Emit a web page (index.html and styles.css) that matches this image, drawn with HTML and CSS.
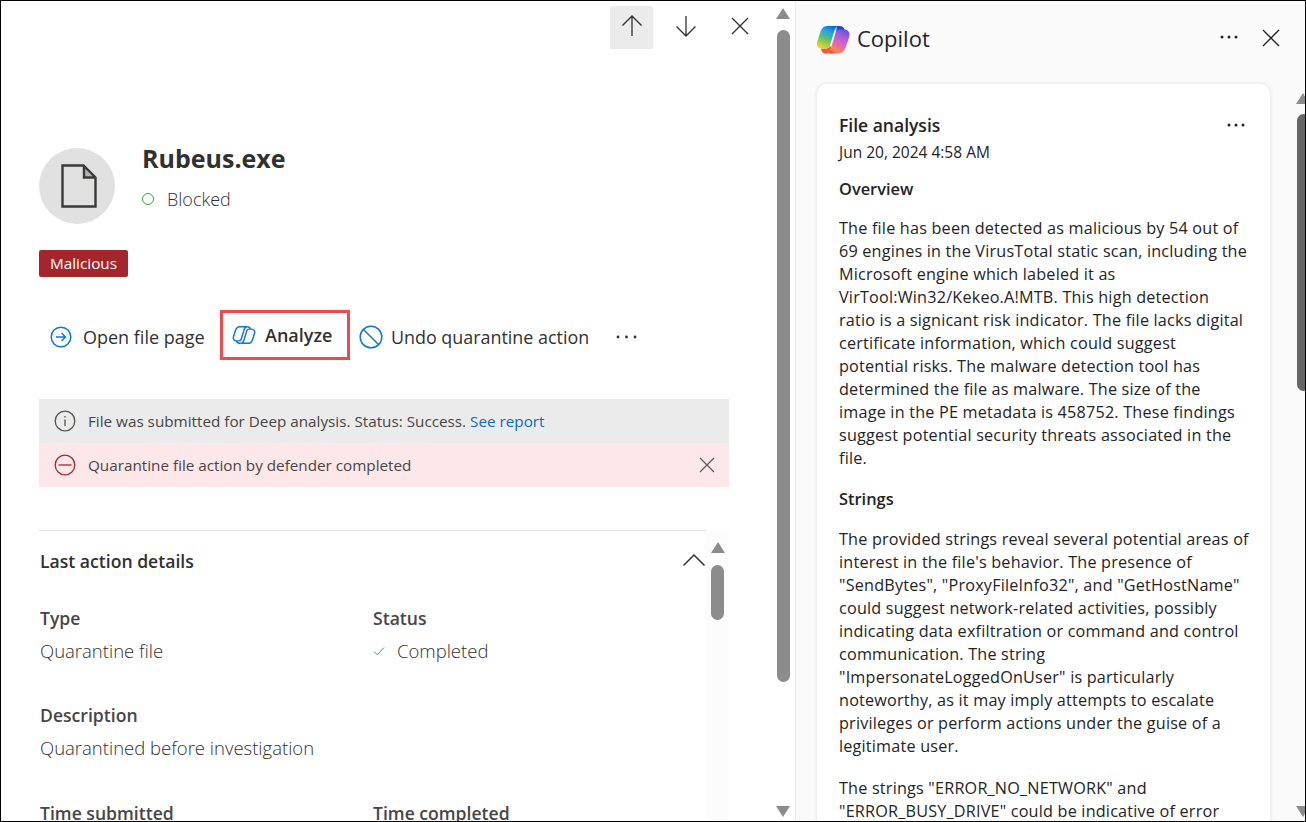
FILE: index.html
```html
<!DOCTYPE html>
<html lang="en">
<head>
  <meta charset="utf-8">
  <title>Rubeus.exe</title>
  <link rel="stylesheet" href="styles.css">
</head>
<body>
<svg class="defs" width="0" height="0">
  <defs>
    <linearGradient id="gradLeft" x1="0.75" y1="0" x2="0.3" y2="1">
      <stop offset="0" stop-color="#0b5fd8"/>
      <stop offset="0.3" stop-color="#1fa4e8"/>
      <stop offset="0.6" stop-color="#5cc26a"/>
      <stop offset="1" stop-color="#ecd42a"/>
    </linearGradient>
    <linearGradient id="gradRight" x1="0.75" y1="0" x2="0.25" y2="1">
      <stop offset="0" stop-color="#6a4fe0"/>
      <stop offset="0.3" stop-color="#b05ddc"/>
      <stop offset="0.65" stop-color="#ee6aa8"/>
      <stop offset="0.85" stop-color="#fb8a4a"/>
      <stop offset="1" stop-color="#e8442c"/>
    </linearGradient>
  </defs>
</svg>

<div class="frame">
  <div class="left-pane">
    <div class="left-main">
      <div class="nav-bar">
        <button class="nav-btn active">
          <svg width="22" height="24" viewBox="0 0 22 24"><path d="M11 22V2M1.500 11.500 11 2l9.500 9.500"/></svg>
        </button>
        <button class="nav-btn">
          <svg width="22" height="24" viewBox="0 0 22 24"><path d="M11 2v20M1.500 12.500 11 22l9.500-9.500"/></svg>
        </button>
        <button class="nav-btn">
          <svg width="18" height="18" viewBox="0 0 18 18"><path d="M1 1l16 16M17 1 1 17"/></svg>
        </button>
      </div>

      <div class="file-head">
        <div class="file-avatar">
          <svg width="36" height="44" viewBox="0 0 36 44"><path class="fold" d="M23 2v11h11z"/><path d="M1.500 1.500h21l12 12v29h-33zM23 2v11.500h11.500"/></svg>
        </div>
        <div>
          <h1 class="file-name">Rubeus.exe</h1>
          <div class="file-state"><span class="state-dot"></span>Blocked</div>
        </div>
      </div>

      <span class="tag">Malicious</span>

      <div class="actions">
        <div class="action">
          <svg width="22" height="22" viewBox="0 0 22 22"><circle cx="11" cy="11" r="9.800"/><path d="M6 11h9.500M11.500 7l4 4-4 4"/></svg>
          Open file page
        </div>
        <div class="action analyze">
          <svg width="24" height="20" viewBox="0 0 24.500 20"><path d="M8 1.500h7.500c-1.700 0-2.600 1.200-3 2.700L9.300 14.500c-.4 1.200-1.300 1.500-2.300 1.500H4.500C2 16 .8 14 1.500 11.700l2-6.200C4.300 3 5.800 1.500 8 1.500z"/><path d="M9 18.500h7.500c2.200 0 3.700-1.500 4.500-4l2-6.200C23.700 6 22.500 4 20 4h-2.500c-1 0-1.900.3-2.300 1.500L12 15.800c-.4 1.500-1.300 2.700-3 2.700z"/><path d="M15.500 1.500c1.800 0 3 1 3.300 2.500M4.500 16c.2 1.500 1.500 2.500 4.500 2.500"/></svg>
          Analyze
        </div>
        <div class="action">
          <svg width="24" height="24" viewBox="0 0 24 24"><circle cx="12" cy="12" r="10.800"/><path d="M4.500 4.500l15 15"/></svg>
          Undo quarantine action
        </div>
        <svg class="more" width="21" height="4" viewBox="0 0 21 4"><circle cx="2" cy="2" r="1.400"/><circle cx="10.500" cy="2" r="1.400"/><circle cx="19" cy="2" r="1.400"/></svg>
      </div>

      <div class="notice info">
        <svg width="22" height="22" viewBox="0 0 22 22"><circle cx="11" cy="11" r="9.800"/><path d="M11 9.500v6.500M11 6v1.600"/></svg>
        <span>File was submitted for Deep analysis. Status: Success. <a class="report">See report</a></span>
      </div>
      <div class="notice blocked">
        <svg width="22" height="22" viewBox="0 0 22 22"><circle cx="11" cy="11" r="9.800"/><path d="M4.500 11h13"/></svg>
        <span>Quarantine file action by defender completed</span>
        <svg class="notice-close" width="16" height="16" viewBox="0 0 16 16"><path d="M1 1l14 14M15 1 1 15"/></svg>
      </div>

      <div class="details">
        <div class="details-body">
          <div class="details-head">
            <h2>Last action details</h2>
            <svg width="24" height="14" viewBox="0 0 24 14"><path d="M1.500 12.500 12 2l10.500 10.500"/></svg>
          </div>
          <div class="fields">
            <div>
              <div class="field-label">Type</div>
              <div class="field-value">Quarantine file</div>
            </div>
            <div>
              <div class="field-label">Status</div>
              <div class="field-value status">
                <svg width="12" height="10" viewBox="0 0 12 10"><path d="M1 5.500 4.300 8.800 11 1.500"/></svg>
                Completed
              </div>
            </div>
            <div class="wide">
              <div class="field-label">Description</div>
              <div class="field-value">Quarantined before investigation</div>
            </div>
            <div>
              <div class="field-label">Time submitted</div>
            </div>
            <div>
              <div class="field-label">Time completed</div>
            </div>
          </div>
        </div>
        <div class="inner-scroll">
          <span class="arrow-up"></span>
          <span class="inner-thumb"></span>
        </div>
      </div>
    </div>
    <div class="pane-scroll">
      <span class="arrow-up"></span>
      <span class="pane-thumb"></span>
      <span class="arrow-down"></span>
    </div>
  </div>

  <div class="copilot">
    <div class="copilot-head">
      <svg class="logo" width="34" height="29" viewBox="0 0 24.500 20.500">
        <path fill="#1a50d0" d="M15 .5h2c2.200 0 3.400 1.200 3.800 3.200h-4.100c-1.200 0-2 .6-2.400 1.800z"/>
        <path fill="#ef5a30" d="M3.500 16.700h4c1.200 0 2-.5 2.500-1.500l1.200.3c-.5 2-1.700 5-4.200 5-2 0-3.200-1.700-3.500-3.800z"/>
        <path fill="url(#gradRight)" d="M7.500 20.300h9c2.500 0 4.300-2.500 5.200-5.200l2.200-6.700C24.700 5.700 23.400 3 20.500 3h-3.800c-1.200 0-2 .6-2.400 1.800L11 15.800c-.5 1.900-1.600 4.500-3.500 4.500z"/>
        <path fill="url(#gradLeft)" d="M8 .5h9c-2 0-3.100 1.400-3.600 3.100L10 14.800c-.4 1.300-1.400 1.900-2.600 1.900H4.200C1.400 16.700.1 14.300.9 11.700l2.100-6.400C3.900 2.500 5.500.5 8 .5z"/>
      </svg>
      <span class="copilot-title">Copilot</span>
      <svg class="head-more" width="18" height="4" viewBox="0 0 18 4"><circle cx="2" cy="2" r="1.500"/><circle cx="9" cy="2" r="1.500"/><circle cx="16" cy="2" r="1.500"/></svg>
      <svg class="head-close" width="18" height="18" viewBox="0 0 18 18"><path d="M1 1l16 16M17 1 1 17"/></svg>
    </div>
    <div class="copilot-body">
      <div class="card">
        <div class="card-top">
          <h3>File analysis</h3>
          <svg class="card-more" width="18" height="4" viewBox="0 0 18 4"><circle cx="2" cy="2" r="1.500"/><circle cx="9" cy="2" r="1.500"/><circle cx="16" cy="2" r="1.500"/></svg>
        </div>
        <div class="card-date">Jun 20, 2024 4:58 AM</div>
        <h4 class="first">Overview</h4>
        <p class="intro">The file has been detected as malicious by 54 out of<br>69 engines in the VirusTotal static scan, including the<br>Microsoft engine which labeled it as<br>VirTool:Win32/Kekeo.A!MTB. This high detection<br>ratio is a signicant risk indicator. The file lacks digital<br>certificate information, which could suggest<br>potential risks. The malware detection tool has<br>determined the file as malware. The size of the<br>image in the PE metadata is 458752. These findings<br>suggest potential security threats associated in the<br>file.</p>
        <h4 class="section">Strings</h4>
        <p>The provided strings reveal several potential areas of<br>interest in the file's behavior. The presence of<br>"SendBytes", "ProxyFileInfo32", and "GetHostName"<br>could suggest network-related activities, possibly<br>indicating data exfiltration or command and control<br>communication. The string<br>"ImpersonateLoggedOnUser" is particularly<br>noteworthy, as it may imply attempts to escalate<br>privileges or perform actions under the guise of a<br>legitimate user.</p>
        <p class="next">The strings "ERROR_NO_NETWORK" and<br>"ERROR_BUSY_DRIVE" could be indicative of error</p>
      </div>
      <div class="card-scroll">
        <span class="arrow-up"></span>
        <span class="card-thumb"></span>
        <span class="arrow-down"></span>
      </div>
    </div>
  </div>
</div>
</body>
</html>
```

FILE: styles.css
```css
* {
  box-sizing: border-box;
}

html, body {
  margin: 0;
  padding: 0;
  height: 100%;
  overflow: hidden;
}

body {
  font-family: "Open Sans", "Noto Sans", sans-serif;
  color: #323130;
  background: #fff;
}

.defs {
  display: block;
  height: 0;
}

.frame {
  display: flex;
  width: 1306px;
  height: 822px;
  border: 1px solid #000;
  overflow: hidden;
}

svg {
  flex: none;
  fill: none;
  stroke: currentColor;
}

/* left pane */
.left-pane {
  display: flex;
  width: 794px;
  height: 100%;
  background: #fff;
  overflow: hidden;
}

.left-main {
  width: 775px;
  padding-left: 38px;
  overflow: hidden;
}

.nav-bar {
  display: flex;
  justify-content: flex-end;
  align-items: center;
  gap: 11px;
  height: 43px;
  margin-top: 5px;
  padding-right: 15px;
}

.nav-btn {
  display: flex;
  align-items: center;
  justify-content: center;
  width: 43px;
  height: 43px;
  padding: 0;
  border: none;
  border-radius: 2px;
  background: none;
  color: #323130;
}

.nav-btn.active {
  background: #ebebeb;
}

.nav-btn svg {
  stroke-width: 1.300;
  margin-bottom: 3px;
}

.file-head {
  display: flex;
  gap: 27px;
  margin-top: 99px;
  width: 690px;
}

.file-avatar {
  display: flex;
  align-items: center;
  justify-content: center;
  width: 76px;
  height: 76px;
  padding-left: 4px;
  border-radius: 50%;
  background: #e1e1e1;
}

.file-avatar svg {
  stroke-width: 2.400;
  stroke: #3b3a39;
}

.file-avatar .fold {
  fill: #b5b5b5;
  stroke: none;
}

.file-name {
  margin: -6px 0 0;
  font-size: 25px;
  line-height: 32px;
  font-weight: 700;
}

.file-state {
  display: flex;
  align-items: center;
  gap: 13px;
  margin-top: 10px;
  font-size: 18px;
  line-height: 30px;
  font-weight: 300;
}

.state-dot {
  width: 12px;
  height: 12px;
  border: 1.500px solid #3fa143;
  border-radius: 50%;
}

.tag {
  display: inline-block;
  margin-top: 26px;
  padding: 0 11px;
  height: 27px;
  line-height: 27px;
  font-size: 15.300px;
  color: #fff;
  background: #a4262c;
  border-radius: 2px;
}

.actions {
  display: flex;
  align-items: center;
  width: 690px;
  height: 50px;
  margin-top: 33px;
  font-size: 18px;
}

.action {
  display: flex;
  align-items: center;
  gap: 11px;
  white-space: nowrap;
  padding-top: 4px;
}

.action svg {
  color: #0f78d4;
  stroke-width: 1.500;
}

.action:first-child {
  padding-left: 11px;
  width: 181px;
}

.analyze {
  justify-content: flex-start;
  width: 130px;
  height: 50px;
  padding: 0 0 1px 9px;
  gap: 9px;
  border: 3px solid #f04a4f;
  font-weight: 600;
  font-size: 18px;
}

.analyze + .action {
  margin-left: 9px;
  gap: 8px;
  font-size: 17.900px;
}

.more {
  margin-left: 27px;
  margin-top: 3px;
  fill: #323130;
  stroke: none;
}

.notice {
  display: flex;
  align-items: center;
  gap: 12px;
  width: 690px;
  height: 44px;
  padding: 0 14px 0 15px;
  font-size: 15.250px;
  white-space: nowrap;
}

.notice svg {
  stroke-width: 1.300;
}

.notice.info {
  margin-top: 39px;
  background: #ebebeb;
  color: #484644;
}

.notice.info svg {
  color: #55534f;
}

.notice.blocked {
  background: #fde7e9;
  color: #484644;
}

.notice.blocked > svg:first-child {
  color: #a4262c;
}

.notice-close {
  margin-left: auto;
  color: #605e5c;
  stroke-width: 1px;
}

.report {
  color: #0f6cbd;
}

.details {
  display: flex;
  width: 690px;
  height: 300px;
  margin-top: 43px;
}

.details-body {
  width: 667px;
  border-top: 1px solid #e1e1e1;
}

.details-head {
  display: flex;
  justify-content: space-between;
  align-items: center;
  height: 60px;
  padding-left: 1px;
}

.details-head h2 {
  margin: 0;
  font-size: 17.600px;
  font-weight: 600;
}

.details-head svg {
  margin-bottom: 2px;
  stroke-width: 1.500;
}

.fields {
  display: grid;
  grid-template-columns: 333px 1fr;
  row-gap: 32px;
  margin-top: 11px;
  padding-left: 1px;
}

.fields .wide {
  grid-column: 1 / 3;
  margin-bottom: 1px;
}

.field-label {
  font-size: 17.600px;
  line-height: 32px;
  font-weight: 600;
  color: #484644;
  white-space: nowrap;
}

.field-value {
  margin-top: 1px;
  font-size: 18.500px;
  line-height: 32px;
  font-weight: 300;
  white-space: nowrap;
}

.status {
  display: flex;
  align-items: center;
  gap: 12px;
}

.status svg {
  color: #3fa143;
  stroke-width: 1;
}

.inner-scroll {
  display: flex;
  flex-direction: column;
  align-items: center;
  width: 23px;
  padding-top: 12px;
  background: #fcfcfc;
}

.inner-thumb {
  width: 13px;
  height: 55px;
  margin-top: 12px;
  border-radius: 7px;
  background: #8c8c8c;
}

.arrow-up, .arrow-down {
  width: 0;
  height: 0;
  border-left: 7px solid transparent;
  border-right: 7px solid transparent;
}

.arrow-up {
  border-bottom: 11px solid #8c8c8c;
}

.arrow-down {
  border-top: 11px solid #8c8c8c;
}

.pane-scroll {
  display: flex;
  flex-direction: column;
  align-items: center;
  width: 19px;
  height: 100%;
  padding: 7px 5px 4px 0;
}

.pane-thumb {
  flex: none;
  width: 13px;
  height: 652px;
  margin: 11px 0 auto;
  border-radius: 7px;
  background: #8c8c8c;
}

/* copilot pane */
.copilot {
  flex: 1;
  display: flex;
  flex-direction: column;
  height: 100%;
  border-left: 1px solid #ececec;
  background: #fafafa;
  overflow: hidden;
}

.copilot-head {
  display: flex;
  align-items: center;
  height: 83px;
  padding: 0 25px 6px 20px;
  flex: none;
}

.logo {
  stroke: none;
}

.copilot-title {
  margin-left: 7px;
  margin-bottom: 3px;
  font-size: 22px;
  color: #242424;
}

.head-more {
  margin-left: auto;
  margin-bottom: 5px;
  fill: #242424;
  stroke: none;
}

.head-close {
  margin-left: 24px;
  margin-bottom: 4px;
  stroke-width: 1.400;
  color: #242424;
}

.copilot-body {
  flex: 1;
  display: flex;
  min-height: 0;
  padding-left: 21px;
}

.card {
  width: 453px;
  height: 760px;
  padding: 26px 22px 0;
  border-radius: 10px 10px 0 0;
  background: #fff;
  box-shadow: 0 0 4px rgba(0, 0, 0, 0.12);
  color: #242424;
}

.card-top {
  display: flex;
  justify-content: space-between;
  align-items: center;
}

.card-top h3 {
  margin: 0;
  font-size: 17.500px;
  line-height: 30px;
  font-weight: 600;
}

.card-more {
  margin-right: 3px;
  fill: #242424;
  stroke: none;
}

.card-date {
  font-size: 15.500px;
  line-height: 24px;
}

.card h4 {
  font-size: 16.400px;
  line-height: 24px;
  font-weight: 600;
}

.card h4.first {
  margin: 13px 0 0;
}

.card h4.section {
  margin: 17px 0 0;
}

.card p {
  margin: 17px 0 0;
  font-size: 16.200px;
  letter-spacing: 0.200px;
  line-height: 23px;
  white-space: nowrap;
}

.card p.intro {
  margin-top: 16px;
}

.card p.next {
  margin-top: 19px;
}

.card-scroll {
  display: flex;
  flex-direction: column;
  align-items: center;
  width: 20px;
  margin-left: auto;
  margin-right: -8px;
  padding: 9px 0 4px 0;
}

.card-thumb {
  flex: none;
  width: 13px;
  height: 277px;
  margin: 10px 0 auto;
  border-radius: 7px;
  background: #666;
}
```
